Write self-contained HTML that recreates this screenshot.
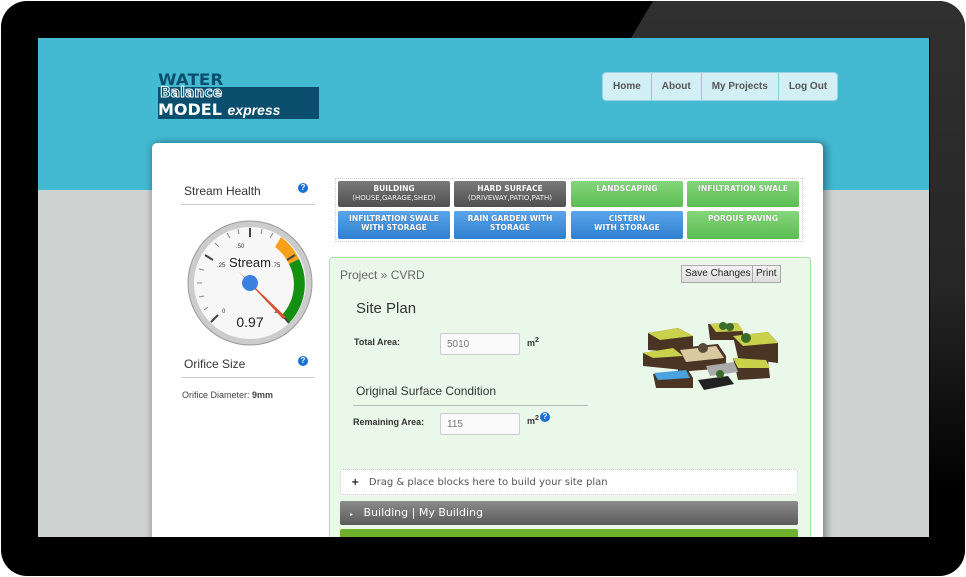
<!DOCTYPE html>
<html><head><style>
body{margin:0;width:966px;height:577px;background:#fff;position:relative;overflow:hidden;font-family:"Liberation Sans",Arial,sans-serif}
.frame{position:absolute;left:1px;top:1px;width:964px;height:575px;background:#000;border-radius:26px;overflow:hidden}
.refl{position:absolute;left:0;top:0;width:964px;height:575px;background:linear-gradient(#303030,#262626 50%,#000 85%);clip-path:polygon(652px 0,964px 0,964px 575px,929px 575px,929px 37px,630px 37px)}
.screen{position:absolute;left:38px;top:38px;width:891px;height:499px;background:#cfd3d2;overflow:hidden}
.hdr{position:absolute;left:0;top:0;width:891px;height:152px;background:#43b9d2}
.card{position:absolute;left:114px;top:105px;width:671px;height:420px;background:#fff;border-radius:5px;box-shadow:0 0 8px rgba(0,0,0,.35),6px 0 6px rgba(0,0,0,.15)}
.nav{position:absolute;left:564px;top:34px;height:27px;display:flex;border-radius:4px;overflow:hidden;border:1px solid #9dd3e0}
.nav div{background:#d2eff6;color:#555;font-size:10px;font-weight:bold;line-height:27px;padding:0 10px;border-right:1px solid #8ccbd9}
.nav div:last-child{border:none}
.btn{position:absolute;width:112px;height:26px;border-radius:2px;color:#fff;font-family:"DejaVu Sans",sans-serif;font-size:7.6px;font-weight:bold;text-align:center;line-height:8.5px;padding-top:4px;box-sizing:border-box;text-shadow:0 0 1px rgba(0,0,0,.4)}
.g{background:linear-gradient(#7a7a7a,#4f4f4f)}
.l{background:linear-gradient(#84d67a,#5cbd52)}
.b{background:linear-gradient(#5aa4ea,#2f7fd0)}
.q{display:inline-block;width:10px;height:10px;border-radius:50%;background:#1a6fd6;color:#fff;font-size:8px;font-weight:bold;text-align:center;line-height:10px}
.inp{position:absolute;width:80px;height:22px;border:1px solid #ccc;border-radius:2px;background:#fafafa;font-size:10px;color:#777;line-height:22px;padding-left:6px;box-sizing:border-box}
</style></head><body>
<div class="frame"><div class="refl"></div></div>
<div class="screen">
<div class="hdr"></div>
<div style="position:absolute;left:120px;top:34px;width:162px;height:47px">
 <div style="position:absolute;left:0;top:0;font:bold 16px 'DejaVu Sans';color:#0b4e6e;line-height:15px;transform:scaleX(1.05);transform-origin:left">WATER</div>
 <div style="position:absolute;left:0;top:15px;width:161px;height:32px;background:#0b4e6e"></div>
 <div style="position:absolute;left:2px;top:13px;font:bold 14px 'DejaVu Sans';color:#0b4e6e;-webkit-text-stroke:1px #fff;line-height:16px">Balance</div>
 <div style="position:absolute;left:0;top:29px;font:bold 16px 'DejaVu Sans';color:#fff;line-height:17px">MODEL <i style="font:italic bold 14px 'Liberation Sans'">express</i></div>
</div>
<div class="nav"><div>Home</div><div>About</div><div>My Projects</div><div>Log Out</div></div>
<div class="card">
 <div style="position:absolute;left:32px;top:41px;font-size:12px;color:#333">Stream Health</div>
 <div style="position:absolute;left:146px;top:40px" class="q">?</div>
 <div style="position:absolute;left:29px;top:61px;width:134px;height:1px;background:#ccc"></div>
 <svg style="position:absolute;left:34px;top:76px" width="128" height="128" viewBox="0 0 128 128">
  <circle cx="64" cy="64" r="62" fill="#ccc" stroke="#999"/>
  <circle cx="64" cy="64" r="56" fill="#f7f7f7"/>
  <path d="M95 18 A56 56 0 0 1 113 40 L103 45 A45 45 0 0 0 89 28Z" fill="#f7a11a"/>
  <path d="M113 40 A56 56 0 0 1 103 104 L96 96 A45 45 0 0 0 103 45Z" fill="#139012"/>
  <g stroke="#444" stroke-width="2">
  <line x1="64" y1="9" x2="64" y2="18"/><line x1="19" y1="36" x2="27" y2="41"/><line x1="25" y1="103" x2="32" y2="96"/><line x1="103" y1="104" x2="96" y2="96"/><line x1="109" y1="36" x2="101" y2="41"/>
  </g>
  <g stroke="#888" stroke-width="1">
  <line x1="41" y1="14" x2="44" y2="19"/><line x1="29" y1="24" x2="33" y2="28"/><line x1="52" y1="10" x2="53" y2="15"/>
  <line x1="13" y1="50" x2="18" y2="51"/><line x1="11" y1="64" x2="16" y2="64"/><line x1="13" y1="78" x2="18" y2="77"/><line x1="18" y1="91" x2="22" y2="88"/>
  <line x1="76" y1="10" x2="75" y2="15"/><line x1="87" y1="14" x2="84" y2="19"/>
  </g>
  <text x="50" y="29" font-size="6" fill="#333">.50</text><text x="31" y="48" font-size="6" fill="#333">.25</text><text x="86" y="48" font-size="6" fill="#333">.75</text>
  <text x="36" y="94" font-size="6" fill="#333">0</text><text x="88" y="94" font-size="6" fill="#333">1</text>
  <text x="64" y="48" font-size="13" fill="#222" text-anchor="middle">Stream</text>
  <path d="M52 52 L100 98 L97 100Z" fill="#d8502e"/>
  <circle cx="64" cy="64" r="8" fill="#3b82e0"/>
  <text x="64" y="108" font-size="14" fill="#222" text-anchor="middle">0.97</text>
 </svg>
 <div style="position:absolute;left:32px;top:214px;font-size:12px;color:#333">Orifice Size</div>
 <div style="position:absolute;left:146px;top:213px" class="q">?</div>
 <div style="position:absolute;left:29px;top:234px;width:134px;height:1px;background:#ccc"></div>
 <div style="position:absolute;left:30px;top:247px;font-size:9px;color:#444">Orifice Diameter: <b>9mm</b></div>

 <div style="position:absolute;left:183px;top:35px;width:466px;height:62px;border:1px dotted #ccc"></div>
 <div class="btn g" style="left:186px;top:38px">BUILDING<br><span style="font-weight:normal;font-size:7px">(HOUSE,GARAGE,SHED)</span></div>
 <div class="btn g" style="left:302px;top:38px">HARD SURFACE<br><span style="font-weight:normal;font-size:7px">(DRIVEWAY,PATIO,PATH)</span></div>
 <div class="btn l" style="left:419px;top:38px">LANDSCAPING</div>
 <div class="btn l" style="left:535px;top:38px">INFILTRATION SWALE</div>
 <div class="btn b" style="left:186px;top:68px;height:28px">INFILTRATION SWALE<br>WITH STORAGE</div>
 <div class="btn b" style="left:302px;top:68px;height:28px">RAIN GARDEN WITH<br>STORAGE</div>
 <div class="btn b" style="left:419px;top:68px;height:28px">CISTERN<br>WITH STORAGE</div>
 <div class="btn l" style="left:535px;top:68px;height:28px">POROUS PAVING</div>

 <div style="position:absolute;left:177px;top:114px;width:480px;height:320px;background:#eaf8ea;border:1px solid #a6e0a6;border-radius:3px">
  <div style="position:absolute;left:10px;top:10px;font-size:12px;color:#666">Project » CVRD</div>
  <div style="position:absolute;left:351px;top:7px;height:16px;border:1px solid #aaa;background:linear-gradient(#f4f4f4,#ddd);font-size:10px;line-height:16px;padding:0 3px;color:#222">Save Changes</div>
  <div style="position:absolute;left:422px;top:7px;height:16px;border:1px solid #aaa;background:linear-gradient(#f4f4f4,#ddd);font-size:10px;line-height:16px;padding:0 3px;color:#222">Print</div>
  <div style="position:absolute;left:26px;top:42px;font-size:15px;color:#333">Site Plan</div>
  <div style="position:absolute;left:24px;top:79px;font-size:9px;font-weight:bold;color:#333">Total Area:</div>
  <div class="inp" style="left:110px;top:75px">5010</div>
  <div style="position:absolute;left:197px;top:79px;font-size:9px;font-weight:bold;color:#333">m<sup style="font-size:7px">2</sup></div>
  <div style="position:absolute;left:26px;top:126px;font-size:12px;color:#333">Original Surface Condition</div>
  <div style="position:absolute;left:23px;top:147px;width:235px;height:1px;background:#bbb"></div>
  <div style="position:absolute;left:23px;top:159px;font-size:9px;font-weight:bold;color:#333">Remaining Area:</div>
  <div class="inp" style="left:110px;top:155px">115</div>
  <div style="position:absolute;left:197px;top:157px;font-size:9px;font-weight:bold;color:#333">m<sup style="font-size:7px">2</sup></div>
  <div style="position:absolute;left:210px;top:154px" class="q">?</div>
  <svg style="position:absolute;left:308px;top:60px" width="144" height="80" viewBox="0 0 144 80">
   <g fill="#4a3424">
   <path d="M10 15 L40 10 L55 18 L55 35 L10 32Z"/><path d="M5 35 L35 30 L45 38 L45 52 L5 48Z"/>
   <path d="M40 30 L80 26 L88 38 L88 50 L40 54Z"/><path d="M70 6 L100 5 L105 14 L105 22 L72 22Z"/>
   <path d="M95 18 L130 14 L140 25 L140 45 L100 40Z"/><path d="M95 40 L130 42 L132 60 L100 62Z"/>
   <path d="M15 56 L50 52 L55 60 L55 70 L18 70Z"/>
   </g>
   <g fill="#c9d24a">
   <path d="M10 15 L40 10 L55 18 L22 22Z"/><path d="M5 35 L35 30 L45 38 L15 40Z"/><path d="M72 6 L100 5 L105 13 L78 14Z"/>
   <path d="M95 18 L130 14 L140 25 L105 28Z"/><path d="M95 40 L128 42 L132 50 L100 50Z"/>
   </g>
   <path d="M42 32 L78 28 L86 40 L48 44Z" fill="#d9c9a0"/>
   <path d="M16 55 L48 52 L52 60 L20 62Z" fill="#4aa3de"/>
   <path d="M68 48 L96 44 L100 54 L72 58Z" fill="#aaa"/>
   <path d="M60 62 L90 58 L96 66 L66 72Z" fill="#222"/>
   <circle cx="85" cy="8" r="4" fill="#3d6b2a"/><circle cx="92" cy="9" r="4" fill="#3d6b2a"/><circle cx="108" cy="20" r="5" fill="#3d6b2a"/><circle cx="65" cy="30" r="5" fill="#5a4a3a"/><circle cx="82" cy="56" r="4" fill="#3d6b2a"/>
  </svg>
  <div style="position:absolute;left:10px;top:211px;width:458px;height:26px;background:#fff;border:1px dotted #ccc;border-radius:3px;font-family:'DejaVu Sans',sans-serif;font-size:10px;color:#555;line-height:26px;padding-left:10px;box-sizing:border-box"><b style="color:#111">+</b>&nbsp;&nbsp; Drag &amp; place blocks here to build your site plan</div>
  <div style="position:absolute;left:10px;top:243px;width:458px;height:24px;background:linear-gradient(#8c8c8c,#5a5a5a);border-radius:2px;font-family:'DejaVu Sans',sans-serif;font-size:11px;color:#fff;line-height:24px;padding-left:10px;box-sizing:border-box"><span style="font-size:6px">▸</span>&nbsp;&nbsp; Building | My Building</div>
  <div style="position:absolute;left:10px;top:271px;width:458px;height:24px;background:#6fb02c;border-radius:2px"></div>
 </div>
</div>
</div>
</body></html>
